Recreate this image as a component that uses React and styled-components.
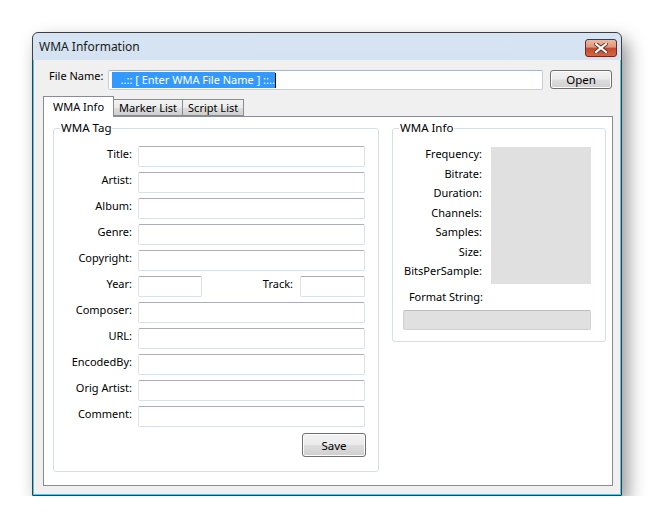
import styled, { createGlobalStyle } from "styled-components";

const GlobalStyle = createGlobalStyle`
  html, body {
    margin: 0;
    background: #ffffff;
  }
  body {
    font-family: "Segoe UI", "Noto Sans", "Open Sans", sans-serif;
    font-size: 11px;
    color: #000;
  }
`;

const tagFields = [
  "Title:",
  "Artist:",
  "Album:",
  "Genre:",
  "Copyright:",
  "YEAR",
  "Composer:",
  "URL:",
  "EncodedBy:",
  "Orig Artist:",
  "Comment:",
];

const infoFields = [
  "Frequency:",
  "Bitrate:",
  "Duration:",
  "Channels:",
  "Samples:",
  "Size:",
  "BitsPerSample:",
];

export default function App() {
  return (
    <>
      <GlobalStyle />
      <Page>
        <Window>
          <TitleBar>
            <Title>WMA Information</Title>
            <CloseBtn>
              <svg width="14" height="10" viewBox="0 0 14 10">
                <path
                  d="M2 1 L12 9 M12 1 L2 9"
                  stroke="#6b2a1c"
                  strokeWidth="4"
                  strokeLinecap="square"
                />
                <path
                  d="M2 1 L12 9 M12 1 L2 9"
                  stroke="#ffffff"
                  strokeWidth="2.2"
                  strokeLinecap="square"
                />
              </svg>
            </CloseBtn>
          </TitleBar>
          <Client>
            <FileRow>
              <FileLabel>File Name:</FileLabel>
              <TextBox>
                <Selected>{"   ..:: [ Enter WMA File Name ] ::.."}</Selected>
                <Caret />
              </TextBox>
              <Button $w={62} $h={19}>Open</Button>
            </FileRow>

            <TabStrip>
              <Tab $active>WMA Info</Tab>
              <Tab>Marker List</Tab>
              <Tab>Script List</Tab>
            </TabStrip>

            <Panel>
              <Group $w={326} $h={351}>
                <Legend>WMA Tag</Legend>
                <TagGrid>
                  {tagFields.map((f) =>
                    f === "YEAR" ? (
                      <Row key={f}>
                        <FieldLabel>Year:</FieldLabel>
                        <YearLine>
                          <Input $w={64} />
                          <TrackLabel>Track:</TrackLabel>
                          <Input $w={65} />
                        </YearLine>
                      </Row>
                    ) : (
                      <Row key={f}>
                        <FieldLabel>{f}</FieldLabel>
                        <Input $w={227} />
                      </Row>
                    )
                  )}
                  <SaveRow>
                    <Button $w={64} $h={24}>Save</Button>
                  </SaveRow>
                </TagGrid>
              </Group>

              <Group $w={214} $h={221}>
                <Legend>WMA Info</Legend>
                <InfoTop>
                  <InfoLabels>
                    {infoFields.map((f) => (
                      <InfoLabel key={f}>{f}</InfoLabel>
                    ))}
                  </InfoLabels>
                  <InfoBox />
                </InfoTop>
                <FormatLabel>Format String:</FormatLabel>
                <FormatBox />
              </Group>
            </Panel>
          </Client>
        </Window>
      </Page>
    </>
  );
}

const Page = styled.div`
  padding: 32px 0 0 32px;
`;

const Window = styled.div`
  width: 588px;
  height: 462px;
  border: 1px solid #3a3f47;
  border-radius: 6px 6px 0 0;
  background: linear-gradient(#d6e4f3, #c2d5ec 60%, #bcd1ea);
  box-shadow: 6px 8px 18px rgba(0, 0, 0, 0.42);
  display: flex;
  flex-direction: column;
`;

const TitleBar = styled.div`
  height: 27px;
  display: flex;
  align-items: center;
  justify-content: space-between;
  padding: 0 4px 0 6px;
`;

const Title = styled.div`
  font-size: 12px;
  color: #1a1a1a;
`;

const CloseBtn = styled.div`
  width: 30px;
  height: 16px;
  margin-top: 2px;
  border: 1px solid #6e2a1f;
  border-radius: 3px;
  background: linear-gradient(#ebb9a3, #e1967a 45%, #c4492c 50%, #d0664a);
  display: flex;
  align-items: center;
  justify-content: center;
`;

const Client = styled.div`
  flex: 1;
  background: #f0f0f0;
  border: 1px solid #4fc6ea;
  border-top: none;
  padding: 10px 7px 8px 9px;
  display: flex;
  flex-direction: column;
`;

const FileRow = styled.div`
  display: flex;
  align-items: flex-start;
  padding-left: 6px;
`;

const FileLabel = styled.div`
  width: 59px;
  line-height: 16px;
  margin-top: -2px;
`;

const TextBox = styled.div`
  width: 435px;
  height: 20px;
  box-sizing: border-box;
  background: #fff;
  border: 1px solid #c4cfdc;
  border-top-color: #abb6c4;
  border-radius: 2px;
  display: flex;
  align-items: center;
  padding-left: 3px;
  margin-right: 7px;
`;

const Selected = styled.span`
  white-space: pre;
  background: #3399ff;
  color: #fff;
  line-height: 16px;
  font-size: 11px;
`;

const Caret = styled.span`
  width: 1px;
  height: 15px;
  background: #000;
`;

const Button = styled.div`
  width: ${(p) => p.$w}px;
  height: ${(p) => p.$h}px;
  box-sizing: border-box;
  border: 1px solid #707070;
  border-radius: 3px;
  box-shadow: inset 0 0 0 1px #fbfbfb;
  background: linear-gradient(#f2f2f2, #ebebeb 48%, #dddddd 52%, #cfcfcf);
  display: flex;
  align-items: center;
  justify-content: center;
  font-size: 11.5px;
`;

const TabStrip = styled.div`
  display: flex;
  align-items: flex-end;
  margin-top: 5px;
  height: 21px;
  position: relative;
  z-index: 1;
`;

const Tab = styled.div`
  height: ${(p) => (p.$active ? 21 : 17)}px;
  box-sizing: border-box;
  padding: 0 ${(p) => (p.$active ? 9 : 5)}px;
  border: 1px solid #898c95;
  border-bottom: ${(p) => (p.$active ? "none" : "1px solid #898c95")};
  margin-left: ${(p) => (p.$active ? 0 : -1)}px;
  background: ${(p) =>
    p.$active ? "#fff" : "linear-gradient(#f2f2f2, #ebebeb 50%, #dddddd 51%, #cfcfcf)"};
  display: flex;
  align-items: center;
  font-size: 11px;
  margin-bottom: ${(p) => (p.$active ? -1 : 0)}px;
  &:first-child {
    padding-bottom: 2px;
  }
`;

const Panel = styled.div`
  flex: 1;
  background: #fff;
  border: 1px solid #898c95;
  display: flex;
  align-items: flex-start;
  gap: 13px;
  padding: 4px 6px 0 9px;
`;

const Group = styled.fieldset`
  width: ${(p) => p.$w}px;
  height: ${(p) => p.$h}px;
  box-sizing: border-box;
  margin: 0;
  padding: 0;
  border: 1px solid #d5dfe5;
  border-radius: 3px;
  min-width: 0;
`;

const Legend = styled.legend`
  padding: 0 1px;
  margin-left: 6px;
  line-height: 14px;
  font-size: 11.5px;
`;

const TagGrid = styled.div`
  display: flex;
  flex-direction: column;
  gap: 5px;
  padding-top: 11px;
`;

const Row = styled.div`
  display: flex;
  align-items: flex-start;
  gap: 6px;
`;

const FieldLabel = styled.div`
  width: 78px;
  text-align: right;
  line-height: 16px;
`;

const Input = styled.div`
  width: ${(p) => p.$w}px;
  height: 21px;
  box-sizing: border-box;
  background: #fff;
  border: 1px solid #dbe1e8;
  border-top-color: #abadb3;
  border-left-color: #e2e3ea;
  border-radius: 2px;
`;

const YearLine = styled.div`
  display: flex;
  align-items: flex-start;
  gap: 7px;
`;

const TrackLabel = styled.div`
  margin-left: auto;
  width: 84px;
  text-align: right;
  line-height: 16px;
`;

const SaveRow = styled.div`
  display: flex;
  justify-content: flex-end;
  padding-right: 12px;
  margin-top: 1px;
`;

const InfoTop = styled.div`
  display: flex;
  align-items: flex-start;
  gap: 9px;
  padding-top: 9px;
`;

const InfoLabels = styled.div`
  width: 89px;
  display: flex;
  flex-direction: column;
  align-items: flex-end;
`;

const InfoLabel = styled.div`
  line-height: 19.5px;
`;

const InfoBox = styled.div`
  width: 100px;
  height: 137px;
  margin-top: 3px;
  background: #e0e0e0;
`;

const FormatLabel = styled.div`
  width: 90px;
  text-align: right;
  line-height: 16px;
  margin-top: 5px;
`;

const FormatBox = styled.div`
  width: 188px;
  height: 20px;
  box-sizing: border-box;
  margin: 5px 0 0 10px;
  background: #e0e0e0;
  border: 1px solid #d0d0d0;
  border-top-color: #bcbcbc;
  border-radius: 2px;
`;
